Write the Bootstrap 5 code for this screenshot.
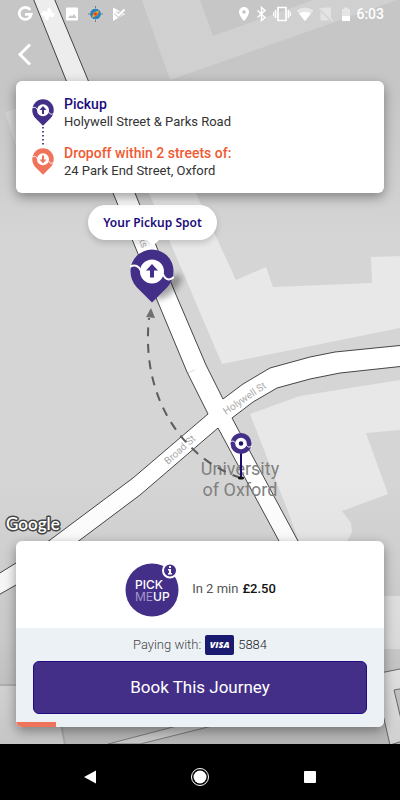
<!DOCTYPE html>
<html lang="en">
<head>
<meta charset="utf-8">
<meta name="viewport" content="width=device-width, initial-scale=1">
<title>Book a journey</title>
<link href="https://cdn.jsdelivr.net/npm/bootstrap@5.3.0/dist/css/bootstrap.min.css" rel="stylesheet">
<style>
:root { --brand: #432f87; --ink: #1c0c7c; --coral: #f0745c; }
body { font-family: Roboto, "Open Sans", sans-serif; background: #d5d5d5; }
.map-canvas { z-index: 0; }
.map-canvas text { font-family: Roboto, sans-serif; }
.map-canvas .spot-label { font-family: "Noto Sans", sans-serif; font-weight: 600; font-size: 12px; fill: var(--ink); }
.overlay-ui { z-index: 1; }
.status-row { height: 28px; padding: 0 16px 0 17px; color: #fff; font: 500 14px/28px Roboto, sans-serif; }
.back-row { height: 53px; padding: 12px 14px; }
.back-btn { width: 24px; height: 28px; line-height: 1; }
.panel { margin: 0 16px; border-radius: 6px; box-shadow: 0 4px 12px rgba(0,0,0,.38); }
.trip { padding: 14px 16px 13px; gap: 10px; }
.trip-pins { width: 22px; }
.stop { font-size: 13px; line-height: 18px; color: #333; }
.stop strong { display: block; font-size: 14px; font-weight: 500; }
.stop + .stop { margin-top: 13px; }
.text-ink { color: var(--ink); }
.text-coral { color: #f05a32; }
.map-brand { margin: 0 0 2px 3px; }
.offer { height: 87px; padding-top: 8px; font-size: 13px; color: #555; }
.offer strong { color: #111; font-weight: 500; }
.pay { background: #ecf1f6; padding: 7px 17px 8px; }
.pay-line { height: 20px; font-size: 13px; font-weight: 300; color: #444; }
.visa { width: 29px; height: 20px; border-radius: 2px; background: #1a1a70; color: #fff; font: italic 800 9px/20px "Open Sans", sans-serif; }
.book { height: 53px; margin-top: 6px; border-radius: 6px; background: var(--brand); border: 1px solid #210b83; color: #fff; font-size: 17px; }
.book:hover { background: #37267a; color: #fff; }
.timer { height: 5px; border-radius: 0; background: #ecf1f6; }
.timer .progress-bar { background: var(--coral); }
.nav-row { height: 56px; margin-top: 17px; padding-top: 9px; gap: 70px; }
.nav-row .btn { width: 40px; }
</style>
</head>
<body>
<svg width="0" height="0" class="position-absolute" aria-hidden="true">
  <symbol id="pin" viewBox="0 0 44 54">
    <path fill="currentColor" d="M22 53.500 6.500 38C2.500 33.500.5 28 .5 22a21.500 21.500 0 0 1 43 0c0 6-2 11.500-6 16z"/>
    <path fill="none" stroke="#fff" stroke-width="2" d="M0 18c5-3 9-1 11 4M33 25c2 6 7 7 11 3"/>
    <circle cx="22" cy="22.500" r="12" fill="#fff"/>
  </symbol>
</svg>
<main class="position-relative min-vh-100 d-flex flex-column overflow-hidden">
  <svg class="map-canvas position-absolute top-0 start-0 w-100 h-100" viewBox="0 0 400 800" preserveAspectRatio="xMidYMid slice" role="img" aria-label="Map of Oxford">
    <defs>
      <linearGradient id="shade" x1="0" y1="0" x2="0" y2="1">
        <stop offset="0" stop-opacity=".07"/><stop offset=".12" stop-opacity=".07"/><stop offset=".3" stop-opacity="0"/>
        <stop offset=".6" stop-opacity="0"/><stop offset=".8" stop-opacity=".06"/><stop offset=".93" stop-opacity=".15"/>
      </linearGradient>
      <filter id="soft" x="-50%" y="-50%" width="200%" height="200%"><feGaussianBlur stdDeviation="3"/></filter>
    </defs>
    <rect width="400" height="800" fill="#d5d5d5"/>
    <g fill="#e8e8e8">
      <path fill="#e0e0e0" fill-rule="evenodd" d="M142 0L170 80 397 0zM200 0L213 36 313 0z"/>
      <path fill="#e0e0e0" d="M5 112L35 102V192L16 147z"/>
      <path d="M130 150H176L236 280 266 267 273 287 372 283 371 257 400 256V328L222 364 149 193z"/>
      <path d="M250 414L300 396 400 380V430L366 433 388 494 342 511 351 523 352 532 345 545H300L289 514z"/>
      <path d="M370 596h30v53h-30zM0 685H16L60 718 65 745H0z"/>
    </g>
    <path fill="none" stroke="#c0c0c0" stroke-width="2" d="M0 685H16M60 718L65 745"/>
    <path fill="#f4f4f4" stroke="#555" stroke-width=".8" d="M375 674L385 672 405 668V688L394 690 406 740 390 745 375 680z"/>
    <path fill="#e8e8e8" stroke="#777" stroke-width=".8" d="M108 744L173 727 240 709V719L208 727 140 744z"/>
    <path fill="#fff" stroke="#333" stroke-width=".9" d="M33-2L66 80 113 193 157 300 187 372 208 414 133 478 50 540 16 563-5 576V597L16 585 80 540 140 495 218 428 279 541 300 580H320L298 541 232 418 253 402 277 388 310 379 340 373 405 366V345L335 352 310 357 270 368 243 384 223 399 206 365 174 290 135 193 88 80 54-2z"/>
    <path stroke="#ddd" d="M188 373l7-3"/>
    <g fill="#aaa" font-size="10">
      <text transform="translate(226 415) rotate(-34)">Holywell St</text>
      <text transform="translate(168 465) rotate(-42)">Broad St</text>
      <text transform="translate(138 239) rotate(68)">ks</text>
    </g>
    <rect width="400" height="800" fill="url(#shade)"/>
    <g fill="#808080" font-size="18" text-anchor="middle">
      <text x="240" y="475">University</text>
      <text x="240" y="496">of Oxford</text>
    </g>
    <path fill="none" stroke="#5c5c5c" stroke-width="2" stroke-dasharray="9 7.500" d="M241 478C190 462 140 405 149 318"/>
    <path fill="#707070" d="M151 308l4 10-9-1z"/>
    <path stroke="#1c0c6c" stroke-width="2" d="M241 453v25"/>
    <ellipse cx="241" cy="478" rx="3" ry="1.500" fill="#111"/>
    <circle cx="241" cy="443.500" r="10.500" fill="#432f87"/>
    <path fill="none" stroke="#fff" d="M230 442c4-2 5 0 6 2M246 444c1 3 3 4 6 2"/>
    <circle cx="241" cy="443.500" r="4" fill="#20106c" stroke="#fff" stroke-width="3.500"/>
    <ellipse cx="168" cy="287" rx="17" ry="7" transform="rotate(-40 168 287)" opacity=".35" filter="url(#soft)"/>
    <use href="#pin" x="130" y="249" width="44" height="54" color="#432f87"/>
    <path fill="#432f87" d="M152 264l6 6.500h-4v7h-4v-7h-4z"/>
    <rect x="88" y="208" width="129" height="35" rx="17" opacity=".16" filter="url(#soft)"/>
    <path fill="#fff" d="M105.500 205h94a17.500 17.500 0 0 1 0 35H159l-6 6-6-6h-41.500a17.500 17.500 0 0 1 0-35z"/>
    <text class="spot-label" x="152.500" y="227" text-anchor="middle">Your Pickup Spot</text>
  </svg>

  <div class="overlay-ui position-relative d-flex flex-column flex-grow-1">
    <header>
      <div class="status-row d-flex align-items-center justify-content-between">
        <svg width="112" height="16" viewBox="0 0 112 16" fill="#fff" aria-hidden="true">
          <path fill="none" stroke="#fff" stroke-width="2.700" d="M13.200 4A6 6 0 1 0 14.200 8.300H8"/>
          <path d="M31 1.500l3.500 2v3l3.500 1-2 4-4-1-1 4.500-3.500-2v-3L24 9l2-4 4 .5z"/>
          <path fill-rule="evenodd" d="M50 1.500h10q1 0 1 1v11q0 1-1 1H50q-1 0-1-1v-11q0-1 1-1zM51 12h8.500L57 8l-2 2.500L53.500 9z"/>
          <circle cx="78.500" cy="8" r="6" fill="#2f83bd" stroke="#ddd"/><path stroke="#777" d="M78.500 0v2M78.500 14v2M71 8h2M84 8h2"/><path fill="#f4a020" d="M82.500 4l-2.500 5.500-5.500 2.500 2.500-5.500z"/><circle cx="78.500" cy="8" r="1.500" fill="#e33a1c"/>
          <path d="M96 1.500L108 8 96 15z"/><path fill="none" stroke="#c8c8c8" stroke-width="4" d="M98.500 6.500l3 3 6-6"/><path fill="none" stroke="#fff" stroke-width="2" d="M98.500 6.500l3 3 6-6"/>
        </svg>
        <div class="d-flex align-items-center gap-1">
          <svg width="114" height="16" viewBox="0 0 114 16" fill="#fff" aria-hidden="true">
            <path fill-rule="evenodd" d="M6 1a5 5 0 0 1 5 5c0 4-5 9-5 9S1 10 1 6a5 5 0 0 1 5-5zm0 3.200a1.800 1.800 0 1 0 0 3.600 1.800 1.800 0 0 0 0-3.600z"/>
            <path fill="none" stroke="#fff" stroke-width="1.500" d="M19.500 4.500l7.500 7-3.500 3V1.500l3.500 3-7.500 7"/>
            <path fill="none" stroke="#fff" stroke-width="1.700" d="M40 1.500h8v13h-8zM37.500 4v8M50.500 4v8"/><path stroke="#fff" d="M35.500 6v4M52.500 6v4"/>
            <path opacity=".45" d="M58.500 4.500q8.500-6 17 0L67 15z"/><path d="M61 7.500q6-3.500 12 0L67 15z"/>
            <path opacity=".4" d="M86 1.500h7v10L83 3zM82.500 5l9 9.500h-9zM81 2l1-1 13 13-1 1z"/>
            <path opacity=".45" d="M104 3h2V1.500h4V3h2v7h-8z"/><path d="M104 10h8v5h-8z"/>
          </svg>
          <time>6:03</time>
        </div>
      </div>
      <div class="back-row">
        <button type="button" class="back-btn btn p-0 border-0" aria-label="Back">
          <svg width="24" height="24" viewBox="0 0 24 24" fill="none" stroke="#fff" stroke-width="3"><path d="M16 2.500L6 12.500l10 10"/></svg>
        </button>
      </div>
    </header>

    <section class="panel trip bg-white d-flex" aria-label="Trip">
      <div class="trip-pins d-flex flex-column align-items-center pt-1" aria-hidden="true">
        <svg width="22" height="27" viewBox="0 0 44 54" color="#432f87"><use href="#pin" width="44" height="54"/><path fill="currentColor" d="M22 14l7 8h-5v8h-4v-8h-5z"/></svg>
        <svg width="4" height="22" viewBox="0 0 4 22"><path stroke="#1c0c7c" stroke-width="1.500" stroke-dasharray="1.500 2.500" d="M2 1v20"/></svg>
        <svg width="22" height="27" viewBox="0 0 44 54" color="#f0745c"><use href="#pin" width="44" height="54"/><path fill="currentColor" d="M22 31l7-8h-5v-8h-4v8h-5z"/></svg>
      </div>
      <div class="flex-grow-1">
        <div class="stop"><strong class="text-ink">Pickup</strong>Holywell Street &amp; Parks Road</div>
        <div class="stop"><strong class="text-coral">Dropoff within 2 streets of:</strong>24 Park End Street, Oxford</div>
      </div>
    </section>

    <div class="map-brand mt-auto">
      <svg class="d-block" width="68" height="26" viewBox="0 0 68 26" role="img" aria-label="Google"><text x="3" y="17" font-family="Lato, sans-serif" font-weight="600" font-size="17" fill="#fff" stroke="#444" stroke-width="3" stroke-linejoin="round" paint-order="stroke">Google</text></svg>
    </div>

    <section class="panel bg-white overflow-hidden" aria-label="Booking">
      <div class="offer d-flex align-items-center justify-content-center">
        <svg class="me-2" width="60" height="56" viewBox="0 0 60 56" role="img" aria-label="Pick Me Up">
          <circle cx="28" cy="29" r="26.500" fill="#432f87"/>
          <g font-family="Inter, sans-serif" font-size="12" font-weight="500" fill="#fff"><text x="11" y="28">PICK</text><text x="11" y="40"><tspan fill="#a497c9" font-weight="400">ME</tspan>UP</text></g>
          <circle cx="46" cy="9.500" r="7" fill="#432f87" stroke="#fff" stroke-width="2"/>
          <path fill="#fff" d="M45 5h2v2h-2zM44 8h3v4h1v1.500h-4V12h1V9.500h-1z"/>
        </svg>
        <span class="me-1">In 2 min</span><strong>£2.50</strong>
      </div>
      <div class="pay">
        <div class="pay-line d-flex align-items-center justify-content-center">
          <span>Paying with:</span><span class="visa text-center mx-1">VISA</span><span class="text-dark">5884</span>
        </div>
        <button type="button" class="book btn w-100">Book This Journey</button>
      </div>
      <div class="timer progress" role="progressbar" aria-label="Offer time" aria-valuenow="11" aria-valuemin="0" aria-valuemax="100"><div class="progress-bar" style="width:11%"></div></div>
    </section>

    <nav class="nav-row bg-black d-flex justify-content-center" aria-label="System">
      <button type="button" class="btn p-0 border-0" aria-label="Back"><svg width="16" height="16" viewBox="0 0 16 16"><path fill="#fff" d="M2 8l12-6.500v13z"/></svg></button>
      <button type="button" class="btn p-0 border-0" aria-label="Home"><svg width="20" height="20" viewBox="0 0 20 20"><circle cx="10" cy="10" r="8.500" fill="none" stroke="#fff"/><circle cx="10" cy="10" r="6.500" fill="#fff"/></svg></button>
      <button type="button" class="btn p-0 border-0" aria-label="Recents"><svg width="16" height="16" viewBox="0 0 16 16"><rect x="2" y="2" width="12" height="12" rx="1" fill="#fff"/></svg></button>
    </nav>
  </div>
</main>
<script src="https://cdn.jsdelivr.net/npm/bootstrap@5.3.0/dist/js/bootstrap.bundle.min.js"></script>
</body>
</html>
